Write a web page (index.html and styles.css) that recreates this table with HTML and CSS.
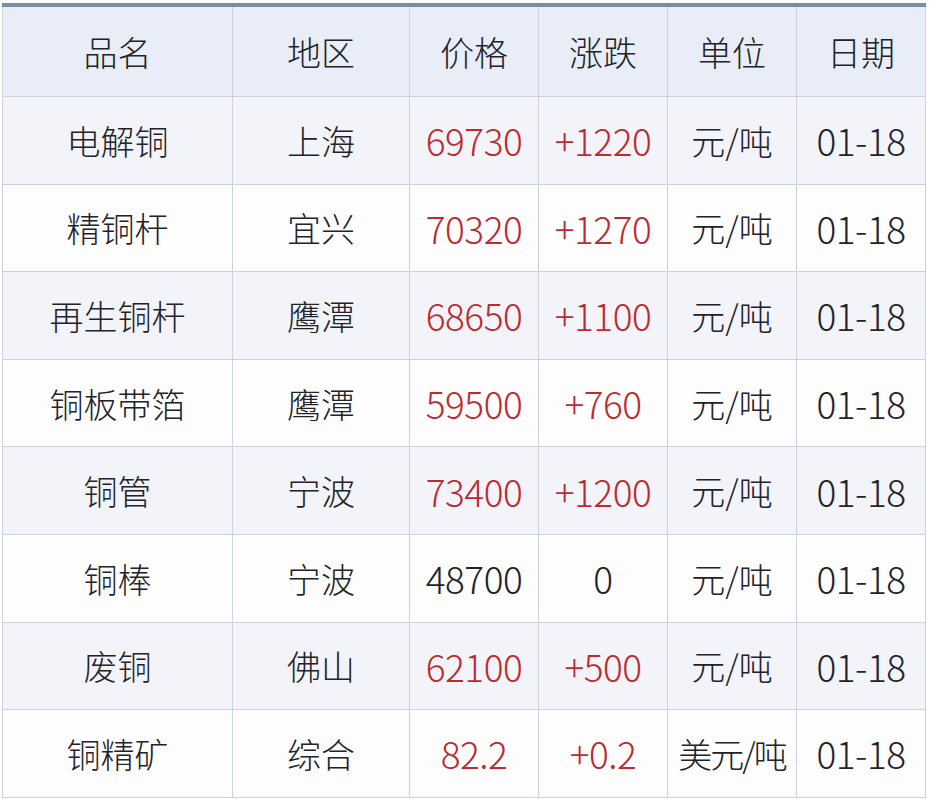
FILE: index.html
```html
<!DOCTYPE html>
<html lang="zh-CN">
<head>
<meta charset="utf-8">
<link rel="stylesheet" href="styles.css">
</head>
<body>
<div class="wrap">
<table class="price">
<colgroup>
<col class="c1"><col class="c2"><col class="c3"><col class="c4"><col class="c5"><col class="c6">
</colgroup>
<thead>
<tr><th>品名</th><th>地区</th><th>价格</th><th>涨跌</th><th>单位</th><th>日期</th></tr>
</thead>
<tbody>
<tr><td>电解铜</td><td>上海</td><td class="num up">69730</td><td class="num up">+1220</td><td>元/吨</td><td class="num">01-18</td></tr>
<tr><td>精铜杆</td><td>宜兴</td><td class="num up">70320</td><td class="num up">+1270</td><td>元/吨</td><td class="num">01-18</td></tr>
<tr><td>再生铜杆</td><td>鹰潭</td><td class="num up">68650</td><td class="num up">+1100</td><td>元/吨</td><td class="num">01-18</td></tr>
<tr><td>铜板带箔</td><td>鹰潭</td><td class="num up">59500</td><td class="num up">+760</td><td>元/吨</td><td class="num">01-18</td></tr>
<tr><td>铜管</td><td>宁波</td><td class="num up">73400</td><td class="num up">+1200</td><td>元/吨</td><td class="num">01-18</td></tr>
<tr><td>铜棒</td><td>宁波</td><td class="num">48700</td><td class="num">0</td><td>元/吨</td><td class="num">01-18</td></tr>
<tr><td>废铜</td><td>佛山</td><td class="num up">62100</td><td class="num up">+500</td><td>元/吨</td><td class="num">01-18</td></tr>
<tr><td>铜精矿</td><td>综合</td><td class="num up">82.2</td><td class="num up">+0.2</td><td class="tight">美元/吨</td><td class="num">01-18</td></tr>
</tbody>
</table>
</div>
</body>
</html>
```
FILE: styles.css
```css
html, body {
  margin: 0;
  padding: 0;
  background: #ffffff;
}
.wrap {
  padding: 3px 0 0 2px;
}
.price {
  border-collapse: collapse;
  table-layout: fixed;
  width: 923px;
  font-family: "Noto Sans CJK SC", "Noto Sans", sans-serif;
  font-size: 34px;
  font-weight: 300;
  color: #222328;
  border-top: 4px solid #7b8ba0;
}
.c1 { width: 230px; }
.c2 { width: 177px; }
.c3 { width: 129px; }
.c4 { width: 129px; }
.c5 { width: 129px; }
.c6 { width: 129px; }
.price th, .price td {
  border: 1px solid #cdd1dc;
  text-align: center;
  vertical-align: middle;
  padding: 0;
  white-space: nowrap;
  overflow: hidden;
}
.price th {
  height: 89px;
  font-weight: 300;
  background: #e8edf7;
}
.price td {
  height: 86.6px;
}
.price tbody tr:nth-child(odd) td {
  background: #f3f4fa;
}
.price tbody tr:nth-child(even) td {
  background: #fdfdfe;
}
.price td.num {
  font-size: 37px;
  letter-spacing: -0.5px;
}
.price td.up {
  color: #bd2a30;
}
.price td.tight {
  letter-spacing: -2px;
}
```
